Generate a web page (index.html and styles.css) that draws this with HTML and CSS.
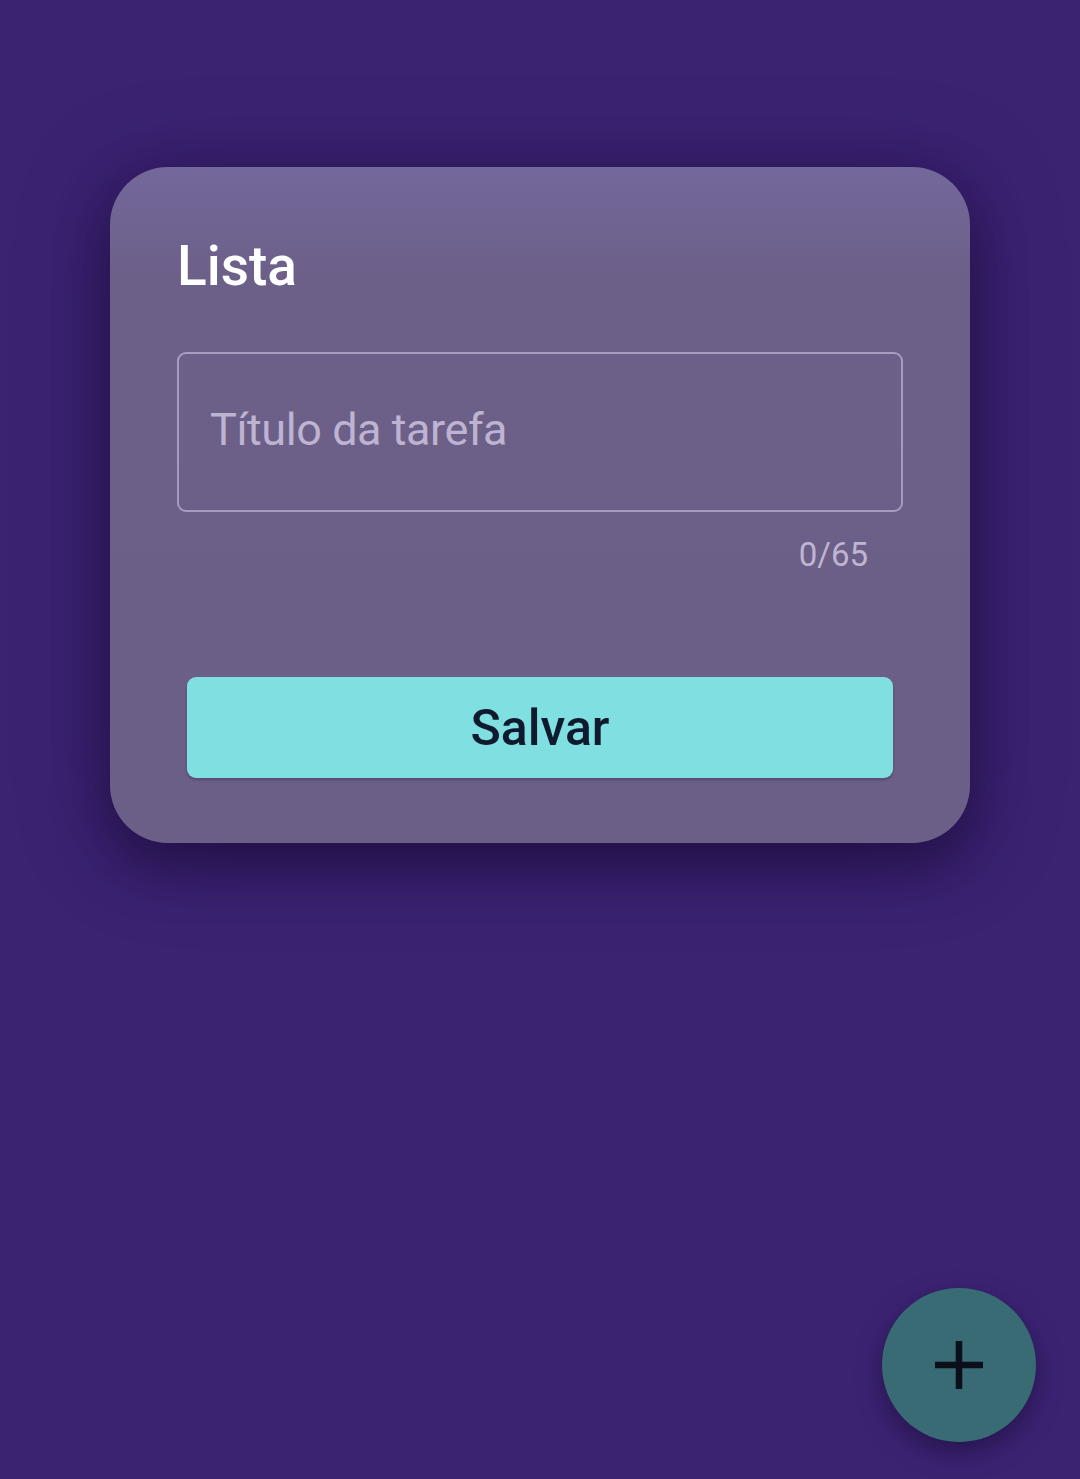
FILE: index.html
```html
<!DOCTYPE html>
<html lang="pt">
<head>
<meta charset="utf-8">
<title>Lista</title>
<link rel="stylesheet" href="styles.css">
</head>
<body>
<main class="screen">
  <section class="card">
    <h1 class="card-title">Lista</h1>
    <div class="field">
      <input class="field-input" type="text" placeholder="Título da tarefa">
    </div>
    <div class="counter">0/65</div>
    <button class="save-btn" type="button">Salvar</button>
  </section>
</main>
<button class="fab" type="button" aria-label="Adicionar">
  <svg class="fab-icon" viewBox="0 0 48 48" width="48" height="48">
    <path d="M24 0V48M0 24H48" stroke="#0b0f1a" stroke-width="6.5" fill="none"/>
  </svg>
</button>
</body>
</html>
```

FILE: styles.css
```css
html, body {
  margin: 0;
  padding: 0;
}
body {
  background: #3b2372;
  width: 1080px;
  height: 1479px;
  overflow: hidden;
  font-family: Roboto, "Noto Sans", sans-serif;
  position: relative;
}
.screen {
  display: flex;
  flex-direction: column;
  padding: 167px 110px 0;
}
.card {
  display: flex;
  flex-direction: column;
  padding: 72px 67px 65px;
  border-radius: 58px;
  background: linear-gradient(180deg, #74679b 0px, #6c6089 110px, #6b5f88 100%);
  box-shadow: 0 22px 50px rgba(22, 10, 50, 0.55), 0 8px 90px rgba(22, 10, 50, 0.35);
}
.card-title {
  margin: 0;
  font-size: 55px;
  line-height: 55px;
  font-weight: 500;
  color: #ffffff;
}
.field {
  margin-top: 58px;
  display: flex;
}
.field-input {
  flex: 1;
  box-sizing: border-box;
  height: 160px;
  border: 2px solid #a89bbf;
  border-radius: 9px;
  background: transparent;
  padding: 0 30px 6px 31px;
  font-family: Roboto, "Noto Sans", sans-serif;
  font-size: 45px;
  letter-spacing: -0.45px;
  color: #ffffff;
  outline: none;
}
.field-input::placeholder {
  color: #beb3d1;
  opacity: 1;
}
.counter {
  margin-top: 26px;
  padding-right: 35px;
  text-align: right;
  font-size: 33px;
  line-height: 33px;
  color: #bfb5d2;
}
.save-btn {
  margin: 106px 10px 0;
  height: 101px;
  border: none;
  border-radius: 9px;
  background: #80dfe0;
  color: #0f1a2e;
  font-family: Roboto, "Noto Sans", sans-serif;
  font-size: 50px;
  font-weight: 500;
  display: flex;
  align-items: center;
  justify-content: center;
  box-shadow: 0 2px 3px rgba(20, 10, 40, 0.25);
}
.fab {
  position: absolute;
  right: 44px;
  bottom: 37px;
  width: 154px;
  height: 154px;
  border-radius: 50%;
  border: none;
  padding: 0;
  background: #386b74;
  display: flex;
  align-items: center;
  justify-content: center;
  box-shadow: 0 10px 24px rgba(20, 8, 45, 0.5);
}
.fab-icon {
  display: block;
}
```
